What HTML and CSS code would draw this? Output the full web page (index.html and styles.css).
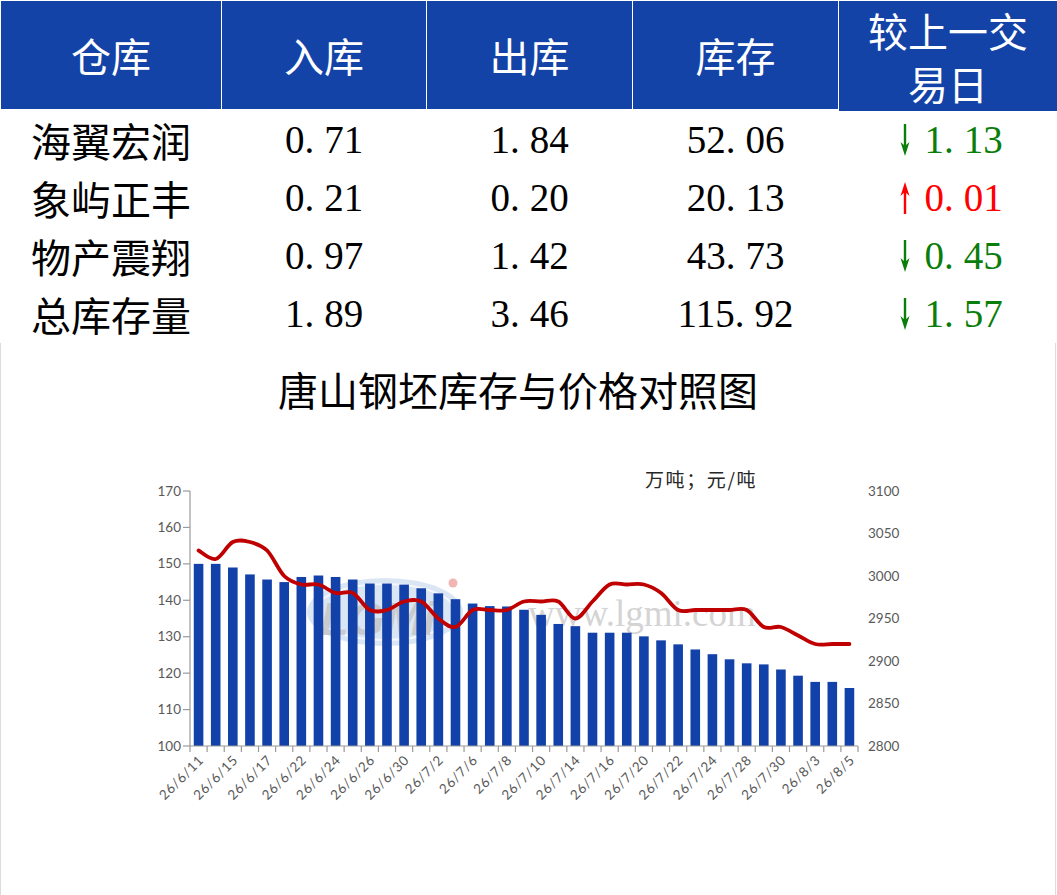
FILE: index.html
```html
<!DOCTYPE html>
<html lang="zh-CN">
<head>
<meta charset="utf-8">
<title>唐山钢坯库存</title>
<link rel="stylesheet" href="styles.css">
</head>
<body>
<div class="page">
  <div class="thead">
    <div class="th">仓库</div>
    <div class="th">入库</div>
    <div class="th">出库</div>
    <div class="th">库存</div>
    <div class="th two">较上一交<br>易日</div>
  </div>
  <div class="row">
    <div class="name">海翼宏润</div>
    <div class="num">0<span class="dot">.</span>71</div>
    <div class="num">1<span class="dot">.</span>84</div>
    <div class="num">52<span class="dot">.</span>06</div>
    <div class="chg down">
      <svg class="arr" width="12" height="34" viewBox="0 0 12 34"><line x1="6" y1="1" x2="6" y2="26" stroke="currentColor" stroke-width="2.4"/><polygon points="1.5,19 6,33 10.5,19 6,23" fill="currentColor"/></svg>
      <span class="num">1<span class="dot">.</span>13</span>
    </div>
  </div>
  <div class="row">
    <div class="name">象屿正丰</div>
    <div class="num">0<span class="dot">.</span>21</div>
    <div class="num">0<span class="dot">.</span>20</div>
    <div class="num">20<span class="dot">.</span>13</div>
    <div class="chg up">
      <svg class="arr" width="12" height="34" viewBox="0 0 12 34"><line x1="6" y1="8" x2="6" y2="33" stroke="currentColor" stroke-width="2.4"/><polygon points="1.5,15 6,1 10.5,15 6,11" fill="currentColor"/></svg>
      <span class="num">0<span class="dot">.</span>01</span>
    </div>
  </div>
  <div class="row">
    <div class="name">物产震翔</div>
    <div class="num">0<span class="dot">.</span>97</div>
    <div class="num">1<span class="dot">.</span>42</div>
    <div class="num">43<span class="dot">.</span>73</div>
    <div class="chg down">
      <svg class="arr" width="12" height="34" viewBox="0 0 12 34"><line x1="6" y1="1" x2="6" y2="26" stroke="currentColor" stroke-width="2.4"/><polygon points="1.5,19 6,33 10.5,19 6,23" fill="currentColor"/></svg>
      <span class="num">0<span class="dot">.</span>45</span>
    </div>
  </div>
  <div class="row">
    <div class="name">总库存量</div>
    <div class="num">1<span class="dot">.</span>89</div>
    <div class="num">3<span class="dot">.</span>46</div>
    <div class="num">115<span class="dot">.</span>92</div>
    <div class="chg down">
      <svg class="arr" width="12" height="34" viewBox="0 0 12 34"><line x1="6" y1="1" x2="6" y2="26" stroke="currentColor" stroke-width="2.4"/><polygon points="1.5,19 6,33 10.5,19 6,23" fill="currentColor"/></svg>
      <span class="num">1<span class="dot">.</span>57</span>
    </div>
  </div>

  <div class="chartbox">
    <div class="ctitle">唐山钢坯库存与价格对照图</div>
    <svg id="chart" class="chart" width="1054" height="481" viewBox="1 412 1054 481">
      <g class="wm">
        <ellipse cx="385" cy="610" rx="78" ry="34" fill="#d3e2f2" opacity="0.85"/>
        <ellipse cx="385" cy="610" rx="70" ry="28" fill="none" stroke="#ffffff" stroke-width="2" opacity="0.7"/>
        <text x="378" y="633" class="wm-logo">LGMi</text>
        <circle cx="453" cy="581" r="4.5" fill="#f3b4b4"/>
        <text x="528" y="624" class="wm-url">www.lgmi.com</text>
      </g>
      <g id="bars"></g>
      <g id="axes" class="axis"></g>
      <path id="price" class="price" d=""/>
      <g id="labels" class="lbl"></g>
      <text x="645" y="485" class="unit">万吨；元/吨</text>
    </svg>
  </div>
</div>
<script src="script.js"></script>
</body>
</html>
```

FILE: styles.css
```css
html, body {
  margin: 0;
  padding: 0;
  background: #ffffff;
}

.page {
  width: 1057px;
  font-family: "Liberation Serif", "Noto Sans CJK SC", serif;
}

.thead,
.row {
  display: grid;
  grid-template-columns: 220px 204px 205px 205px 1fr;
  column-gap: 1px;
  padding-left: 1px;
}

.thead {
  padding-top: 1px;
  background: #ffffff;
}

.th {
  height: 108px;
  background: #1443a8;
  color: #ffffff;
  font-family: "Noto Sans CJK SC", sans-serif;
  font-size: 40px;
  display: flex;
  align-items: center;
  justify-content: center;
  text-align: center;
  line-height: 53px;
}

.th.two {
  padding-top: 2px;
}

.row {
  height: 58px;
  align-items: center;
  justify-items: center;
}

.name {
  font-family: "Noto Sans CJK SC", sans-serif;
  font-size: 40px;
  line-height: 58px;
  color: #000000;
}

.num {
  font-family: "Liberation Serif", serif;
  font-size: 39px;
  line-height: 58px;
  color: #000000;
}

.dot {
  padding-right: 10px;
}

.chg {
  display: flex;
  align-items: center;
  gap: 13px;
  padding-left: 6px;
}

.chg .num {
  color: inherit;
}

.chg.down {
  color: #0a7d0a;
}

.chg.up {
  color: #ff0000;
}

.arr {
  display: block;
}

.chartbox {
  width: 1054px;
  height: 552px;
  border: 1px solid #dcdcdc;
  border-top: none;
}

.ctitle {
  font-family: "Noto Sans CJK SC", sans-serif;
  font-size: 40px;
  line-height: 50px;
  padding-top: 21px;
  padding-right: 20px;
  text-align: center;
  color: #000000;
}

.chart {
  display: block;
}

.wm-logo {
  font-family: "Liberation Sans", sans-serif;
  font-weight: bold;
  font-style: italic;
  font-size: 46px;
  fill: #c4c4c4;
  text-anchor: middle;
  opacity: 0.8;
}

.wm-url {
  font-family: "Liberation Serif", serif;
  font-size: 37px;
  fill: #d4d4d4;
}

.axis line {
  stroke: #9a9a9a;
  stroke-width: 1.2;
}

.price {
  fill: none;
  stroke: #c00000;
  stroke-width: 3.8;
  stroke-linejoin: round;
  stroke-linecap: round;
}

.lbl text {
  font-family: "Lato", "Liberation Sans", sans-serif;
  font-size: 13.5px;
  fill: #595959;
}

.unit {
  font-family: "Noto Sans CJK SC", sans-serif;
  font-size: 19px;
  letter-spacing: 1.6px;
  fill: #262626;
}
```

FILE: script.js
```js
(function () {
  var NS = 'http://www.w3.org/2000/svg';
  var bars = [150, 150, 149, 147.1, 145.7, 145, 146.4, 146.8, 146.4, 145.7,
    144.6, 144.6, 144.3, 143.3, 141.9, 140.3, 139.1, 138.4, 138.3, 137.4,
    136, 133.5, 132.9, 131.1, 131.1, 131.1, 130.1, 129, 127.9, 126.5,
    125.2, 123.8, 122.7, 122.4, 121, 119.3, 117.6, 117.6, 115.92];
  var prices = [3030, 3020, 3040, 3040, 3030, 3000, 2990, 2990, 2980, 2980,
    2960, 2960, 2970, 2970, 2950, 2940, 2960, 2960, 2960, 2970,
    2970, 2970, 2950, 2970, 2990, 2990, 2990, 2980, 2960, 2960,
    2960, 2960, 2960, 2940, 2940, 2930, 2920, 2920, 2920];
  var dates = ['26/6/11', '26/6/15', '26/6/17', '26/6/22', '26/6/24', '26/6/26',
    '26/6/30', '26/7/2', '26/7/6', '26/7/8', '26/7/10', '26/7/14', '26/7/16',
    '26/7/20', '26/7/22', '26/7/24', '26/7/28', '26/7/30', '26/8/3', '26/8/5'];

  var X0 = 190, X1 = 858, Y0 = 744, YT = 489;
  var n = bars.length;
  var w = (X1 - X0) / n;
  function yl(v) { return Y0 - (v - 100) * (Y0 - YT) / 70; }
  function yr(p) { return Y0 - (p - 2800) * (Y0 - YT) / 300; }
  function cx(i) { return X0 + (i + 0.5) * w; }

  function mk(parent, tag, attrs, text) {
    var e = document.createElementNS(NS, tag);
    for (var k in attrs) e.setAttribute(k, attrs[k]);
    if (text != null) e.textContent = text;
    parent.appendChild(e);
    return e;
  }

  var gb = document.getElementById('bars');
  var bw = 9.6;
  bars.forEach(function (v, i) {
    var y = yl(v);
    mk(gb, 'rect', { x: (cx(i) - bw / 2).toFixed(2), y: y.toFixed(2), width: bw, height: (Y0 - y).toFixed(2), fill: '#1341aa' });
  });

  var ga = document.getElementById('axes');
  mk(ga, 'line', { x1: X0, y1: YT, x2: X0, y2: Y0 });
  mk(ga, 'line', { x1: X0, y1: Y0, x2: X1, y2: Y0 });
  for (var k = 0; k <= 7; k++) {
    var yy = yl(100 + k * 10);
    mk(ga, 'line', { x1: X0 - 7, y1: yy, x2: X0, y2: yy });
  }
  for (var t = 0; t <= n; t++) {
    var xx = X0 + t * w;
    mk(ga, 'line', { x1: xx, y1: Y0, x2: xx, y2: Y0 + 6 });
  }

  var gl = document.getElementById('labels');
  for (var a = 0; a <= 7; a++) {
    var v = 100 + a * 10;
    mk(gl, 'text', { x: 181, y: (yl(v) + 4.6).toFixed(2), 'text-anchor': 'end' }, String(v));
  }
  for (var b = 0; b <= 6; b++) {
    var p = 2800 + b * 50;
    mk(gl, 'text', { x: 868, y: (yr(p) + 4.6).toFixed(2) }, String(p));
  }
  dates.forEach(function (d, j) {
    var i = j * 2;
    var ax = cx(i) + 6, ay = 759;
    mk(gl, 'text', {
      x: ax.toFixed(2), y: ay, 'text-anchor': 'end',
      transform: 'rotate(-45 ' + ax.toFixed(2) + ' ' + ay + ')',
      'letter-spacing': '0.7'
    }, d);
  });

  var pts = prices.map(function (pr, i) { return [cx(i), yr(pr)]; });
  function f(q) { return q[0].toFixed(2) + ',' + q[1].toFixed(2); }
  var dd = 'M' + f(pts[0]);
  var T = 1 / 6;
  for (var i = 0; i < pts.length - 1; i++) {
    var p0 = pts[i - 1] || pts[i], p1 = pts[i], p2 = pts[i + 1], p3 = pts[i + 2] || p2;
    var c1 = [p1[0] + (p2[0] - p0[0]) * T, p1[1] + (p2[1] - p0[1]) * T];
    var c2 = [p2[0] - (p3[0] - p1[0]) * T, p2[1] - (p3[1] - p1[1]) * T];
    dd += ' C' + f(c1) + ' ' + f(c2) + ' ' + f(p2);
  }
  document.getElementById('price').setAttribute('d', dd);
})();
```
